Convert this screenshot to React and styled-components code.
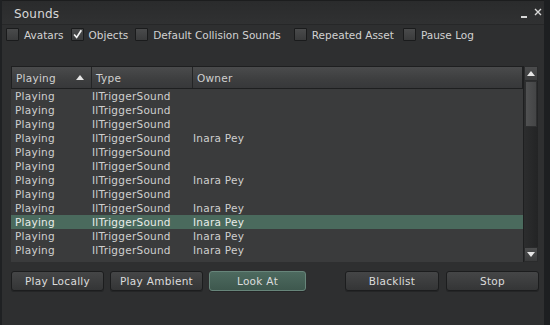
import React from "react";
import styled, { createGlobalStyle } from "styled-components";

const GlobalStyle = createGlobalStyle`
  html, body {
    margin: 0;
    padding: 0;
    background: #1d1f21;
  }
  * {
    box-sizing: border-box;
  }
`;

const rows = [
  { owner: "" },
  { owner: "" },
  { owner: "" },
  { owner: "Inara Pey" },
  { owner: "" },
  { owner: "" },
  { owner: "Inara Pey" },
  { owner: "" },
  { owner: "Inara Pey" },
  { owner: "Inara Pey", selected: true },
  { owner: "Inara Pey" },
  { owner: "Inara Pey" },
];

const filters = [
  { label: "Avatars", checked: false, extra: 0 },
  { label: "Objects", checked: true, extra: 0 },
  { label: "Default Collision Sounds", checked: false, extra: 6 },
  { label: "Repeated Asset", checked: false, extra: 2 },
  { label: "Pause Log", checked: false, extra: 0 },
];

const App = () => {
  return (
    <>
      <GlobalStyle />
      <Window>
        <TitleBar>
          <Title>Sounds</Title>
          <Controls>
            <MinIcon />
            <CloseIcon viewBox="0 0 8 8">
              <path d="M1 1 L7 7 M7 1 L1 7" stroke="#d8d8d8" strokeWidth="1.4" />
            </CloseIcon>
          </Controls>
        </TitleBar>

        <FilterRow>
          {filters.map((f) => (
            <Filter key={f.label} $extra={f.extra}>
              <Box>
                {f.checked && (
                  <svg width="13" height="13" viewBox="0 0 13 13">
                    <path
                      d="M2.5 6.5 L5.5 10 L11 1.5"
                      fill="none"
                      stroke="#f2f2f2"
                      strokeWidth="2"
                    />
                  </svg>
                )}
              </Box>
              <FilterLabel>{f.label}</FilterLabel>
            </Filter>
          ))}
        </FilterRow>

        <ListArea>
          <Table>
            <HeaderRow>
              <HeadCell $width={80}>
                Playing
                <SortArrow viewBox="0 0 8 5">
                  <path d="M0 5 L4 0 L8 5 Z" fill="#e6e6e6" />
                </SortArrow>
              </HeadCell>
              <HeadCell $width={101}>Type</HeadCell>
              <HeadCell $grow>Owner</HeadCell>
            </HeaderRow>
            {rows.map((r, i) => (
              <Row key={i} $selected={r.selected}>
                <Cell $width={80} $pad={4}>Playing</Cell>
                <Cell $width={101}>IlTriggerSound</Cell>
                <Cell $grow>{r.owner}</Cell>
              </Row>
            ))}
          </Table>
          <ScrollBar>
            <ScrollButton>
              <svg width="8" height="5" viewBox="0 0 8 5">
                <path d="M0 5 L4 0 L8 5 Z" fill="#e6e6e6" />
              </svg>
            </ScrollButton>
            <Track>
              <Thumb />
            </Track>
            <ScrollButton>
              <svg width="8" height="5" viewBox="0 0 8 5">
                <path d="M0 0 L4 5 L8 0 Z" fill="#e6e6e6" />
              </svg>
            </ScrollButton>
          </ScrollBar>
        </ListArea>

        <ButtonRow>
          <ButtonGroup $gap={6}>
            <Button $width={93}>Play Locally</Button>
            <Button $width={93}>Play Ambient</Button>
            <Button $width={97} $active>
              Look At
            </Button>
          </ButtonGroup>
          <ButtonGroup $gap={7}>
            <Button $width={94}>Blacklist</Button>
            <Button $width={93}>Stop</Button>
          </ButtonGroup>
        </ButtonRow>
      </Window>
    </>
  );
};

const Window = styled.div`
  width: 544px;
  height: 325px;
  background: #2e2f30;
  border-left: 2px solid #1f2123;
  display: flex;
  flex-direction: column;
  font-family: "DejaVu Sans", "Liberation Sans", sans-serif;
  color: #d6d6d6;
`;

const TitleBar = styled.div`
  height: 25px;
  padding: 3px 2px 0 12px;
  display: flex;
  align-items: center;
  justify-content: space-between;
  background: linear-gradient(#2a2b2c, #303132);
  border-top: 1px solid #1c1d1e;
  border-bottom: 1px solid #262728;
`;

const Title = styled.span`
  font-size: 12px;
  letter-spacing: 0.2px;
  color: #d8d8d8;
`;

const Controls = styled.div`
  display: flex;
  align-items: center;
  gap: 7px;
  margin-top: -4px;
`;

const MinIcon = styled.span`
  width: 6px;
  height: 2px;
  margin-top: 9px;
  background: #d8d8d8;
`;

const CloseIcon = styled.svg`
  width: 8px;
  height: 8px;
`;

const FilterRow = styled.div`
  height: 19px;
  padding-left: 4px;
  display: flex;
  align-items: center;
  gap: 7px;
`;

const Filter = styled.label`
  display: flex;
  align-items: center;
  gap: 5px;
  margin-right: ${(p) => p.$extra || 0}px;
`;

const Box = styled.span`
  width: 13px;
  height: 13px;
  border: 1px solid #1a1b1c;
  border-radius: 1px;
  background: linear-gradient(#4a4b4c, #3a3b3c);
  display: flex;
  align-items: center;
  justify-content: center;
  overflow: visible;
`;

const FilterLabel = styled.span`
  font-size: 10.5px;
  color: #d2d2d2;
`;

const ListArea = styled.div`
  margin: 22px 6px 0 9px;
  height: 196px;
  display: flex;
`;

const Table = styled.div`
  flex: 1;
  background: #3a3b3c;
  display: flex;
  flex-direction: column;
`;

const HeaderRow = styled.div`
  height: 23px;
  display: flex;
  border: 1px solid #1e1f20;
  background: linear-gradient(#4a4b4c, #3d3e3f 60%, #37383a);
`;

const HeadCell = styled.div`
  ${(p) => (p.$grow ? "flex: 1;" : `width: ${p.$width}px;`)}
  padding-left: 4px;
  font-size: 10.5px;
  letter-spacing: 0.25px;
  color: #d0d0d0;
  display: flex;
  align-items: center;
  justify-content: space-between;
  padding-right: 7px;
  border-right: 1px solid #232425;
  &:last-child {
    border-right: none;
  }
`;

const SortArrow = styled.svg`
  width: 8px;
  height: 5px;
`;

const Row = styled.div`
  height: 14px;
  display: flex;
  align-items: center;
  background: ${(p) => (p.$selected ? "#4a6a5d" : "transparent")};
  color: ${(p) => (p.$selected ? "#e8ece9" : "#cfcfcf")};
`;

const Cell = styled.div`
  ${(p) => (p.$grow ? "flex: 1;" : `width: ${p.$width}px;`)}
  padding-left: ${(p) => p.$pad ?? 1}px;
  font-size: 10.5px;
  letter-spacing: 0.25px;
  white-space: nowrap;
`;

const ScrollBar = styled.div`
  width: 15px;
  display: flex;
  flex-direction: column;
  background: #262728;
  border-left: 1px solid #1e1f20;
`;

const ScrollButton = styled.div`
  height: 15px;
  display: flex;
  align-items: center;
  justify-content: center;
  background: linear-gradient(#4c4d4e, #3a3b3c);
  border: 1px solid #2a2b2c;
`;

const Track = styled.div`
  flex: 1;
  padding: 0 1px;
  background: linear-gradient(90deg, #2c2d2e, #232425);
`;

const Thumb = styled.div`
  height: 46px;
  background: linear-gradient(90deg, #505152, #444546);
  border: 1px solid #2e2f30;
`;

const ButtonRow = styled.div`
  margin-top: 9px;
  padding: 0 5px 0 9px;
  display: flex;
  justify-content: space-between;
`;

const ButtonGroup = styled.div`
  display: flex;
  gap: ${(p) => p.$gap}px;
`;

const Button = styled.button`
  width: ${(p) => p.$width}px;
  height: 20px;
  padding: 0;
  font-family: "DejaVu Sans", "Liberation Sans", sans-serif;
  font-size: 10.5px;
  letter-spacing: 0.3px;
  color: #dcdcdc;
  border-radius: 3px;
  border: 1px solid ${(p) => (p.$active ? "#67857a" : "#1c1d1e")};
  background: ${(p) =>
    p.$active
      ? "linear-gradient(#4d6a5f, #3e584e)"
      : "linear-gradient(#454647, #343536)"};
  box-shadow: 0 1px 0 #242526;
`;

export default App;
